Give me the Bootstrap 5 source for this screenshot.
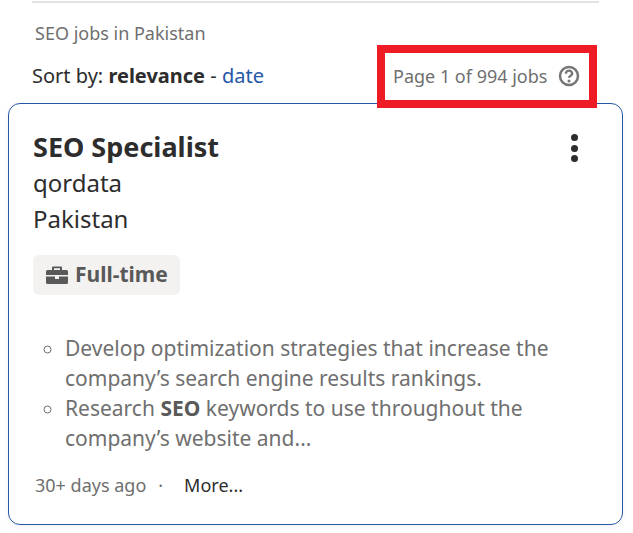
<!DOCTYPE html>
<html lang="en">
<head>
  <meta charset="UTF-8">
  <meta name="viewport" content="width=device-width, initial-scale=1.0">
  <title>SEO jobs in Pakistan</title>
  <link rel="stylesheet" href="https://cdn.jsdelivr.net/npm/bootstrap@5.3.0/dist/css/bootstrap.min.css">
  <style>
    body {
      font-family: "Noto Sans", sans-serif;
      color: #2d2d2d;
      overflow: hidden;
    }
    .page-wrap {
      position: relative;
      height: 533px;
      padding: 1px 10px 0 8px;
    }
    .top-rule {
      height: 2px;
      background: #e4e2e0;
      margin: 0 24px 0 24px;
    }
    .search-title {
      font-size: 18px;
      line-height: 24px;
      color: #6f6f6f;
      margin: 18px 0 0 27px;
    }
    .sort-row {
      height: 48px;
      margin: 7px 0 3px;
      padding: 0 0 0 24px;
      font-size: 20px;
      line-height: 30px;
    }
    .sort-row a {
      color: #2557a7;
      text-decoration: none;
    }
    .page-count {
      font-size: 18px;
      color: #6f6f6f;
      width: 230px;
      padding-right: 43px;
    }
    .red-box {
      position: absolute;
      left: 377px;
      top: 45px;
      width: 220px;
      height: 63px;
      border: 8px solid #ee1c25;
    }
    .job-card {
      border: 1px solid #2557a7;
      border-radius: 12px;
      height: 422px;
      padding: 24px 24px 0;
      box-shadow: 0 2px 6px rgba(0, 0, 0, .05);
    }
    .job-title {
      font-size: 27px;
      line-height: 37px;
      font-weight: 700;
      margin: 0;
    }
    .job-info {
      font-size: 24px;
      line-height: 36px;
    }
    .dots {
      gap: 3.5px;
      padding: 6px 20px 0 0;
    }
    .dots span {
      width: 7px;
      height: 7px;
      border-radius: 50%;
      background: #2d2d2d;
    }
    .job-tag {
      background: #f3f2f1;
      border-radius: 6px;
      height: 40px;
      padding: 0 12px 0 13px;
      margin-top: 18px;
      font-size: 21px;
      font-weight: 700;
      color: #595959;
      gap: 7px;
    }
    .job-text {
      list-style: circle;
      font-size: 21px;
      line-height: 30px;
      color: #6f6f6f;
      padding-left: 32px;
      margin: 38px 0 0;
    }
    .job-text b {
      color: #595959;
    }
    .job-foot {
      margin-top: 18px;
      font-size: 18px;
      line-height: 28px;
      color: #6f6f6f;
      padding-left: 2px;
    }
    .job-foot a {
      color: #2d2d2d;
      text-decoration: none;
      margin-left: 21px;
    }
    .job-foot .sep {
      margin-left: 12px;
    }
  </style>
</head>
<body>
  <div class="page-wrap">
    <div class="top-rule"></div>
    <div class="search-title">SEO jobs in Pakistan</div>

    <div class="sort-row d-flex justify-content-between align-items-center">
      <div>Sort by: <b>relevance</b> - <a href="#">date</a></div>
      <div class="page-count d-flex justify-content-between align-items-center">
        <span>Page 1 of 994 jobs</span>
        <svg width="22" height="22" viewBox="0 0 22 22" fill="none">
          <circle cx="11" cy="11" r="9" stroke="#767676" stroke-width="2.500"/>
          <path d="M7.800 8.800a3.200 3.200 0 0 1 6.400 0c0 2-3.200 2-3.200 4" stroke="#767676" stroke-width="2.400"/>
          <circle cx="11" cy="16" r="1.500" fill="#767676"/>
        </svg>
      </div>
    </div>

    <!-- job card -->
    <div class="job-card bg-white">
      <div class="d-flex justify-content-between">
        <h2 class="job-title">SEO Specialist</h2>
        <div class="dots d-flex flex-column">
          <span></span><span></span><span></span>
        </div>
      </div>
      <div class="job-info">qordata</div>
      <div class="job-info">Pakistan</div>

      <div class="job-tag d-inline-flex align-items-center">
        <svg width="22" height="20" viewBox="0 0 22 20" fill="#595959">
          <path d="M7 1.500h8a1 1 0 0 1 1 1V5h4.500A1.500 1.500 0 0 1 22 6.500V10H0V6.500A1.500 1.500 0 0 1 1.500 5H6V2.500a1 1 0 0 1 1-1zM8 3.200V5h6V3.200z"/>
          <path d="M0 11.500h9V14h4v-2.500h9v6A1.500 1.500 0 0 1 20.500 19h-19A1.500 1.500 0 0 1 0 17.500z"/>
        </svg>
        <span>Full-time</span>
      </div>

      <ul class="job-text">
        <li>Develop optimization strategies that increase the company’s search engine results rankings.</li>
        <li>Research <b>SEO</b> keywords to use throughout the company’s website and...</li>
      </ul>

      <div class="job-foot d-flex align-items-center">
        <span>30+ days ago</span><span class="sep">·</span><a href="#">More...</a>
      </div>
    </div>

    <div class="red-box"></div>
  </div>

  <script src="https://cdn.jsdelivr.net/npm/bootstrap@5.3.0/dist/js/bootstrap.bundle.min.js"></script>
</body>
</html>
